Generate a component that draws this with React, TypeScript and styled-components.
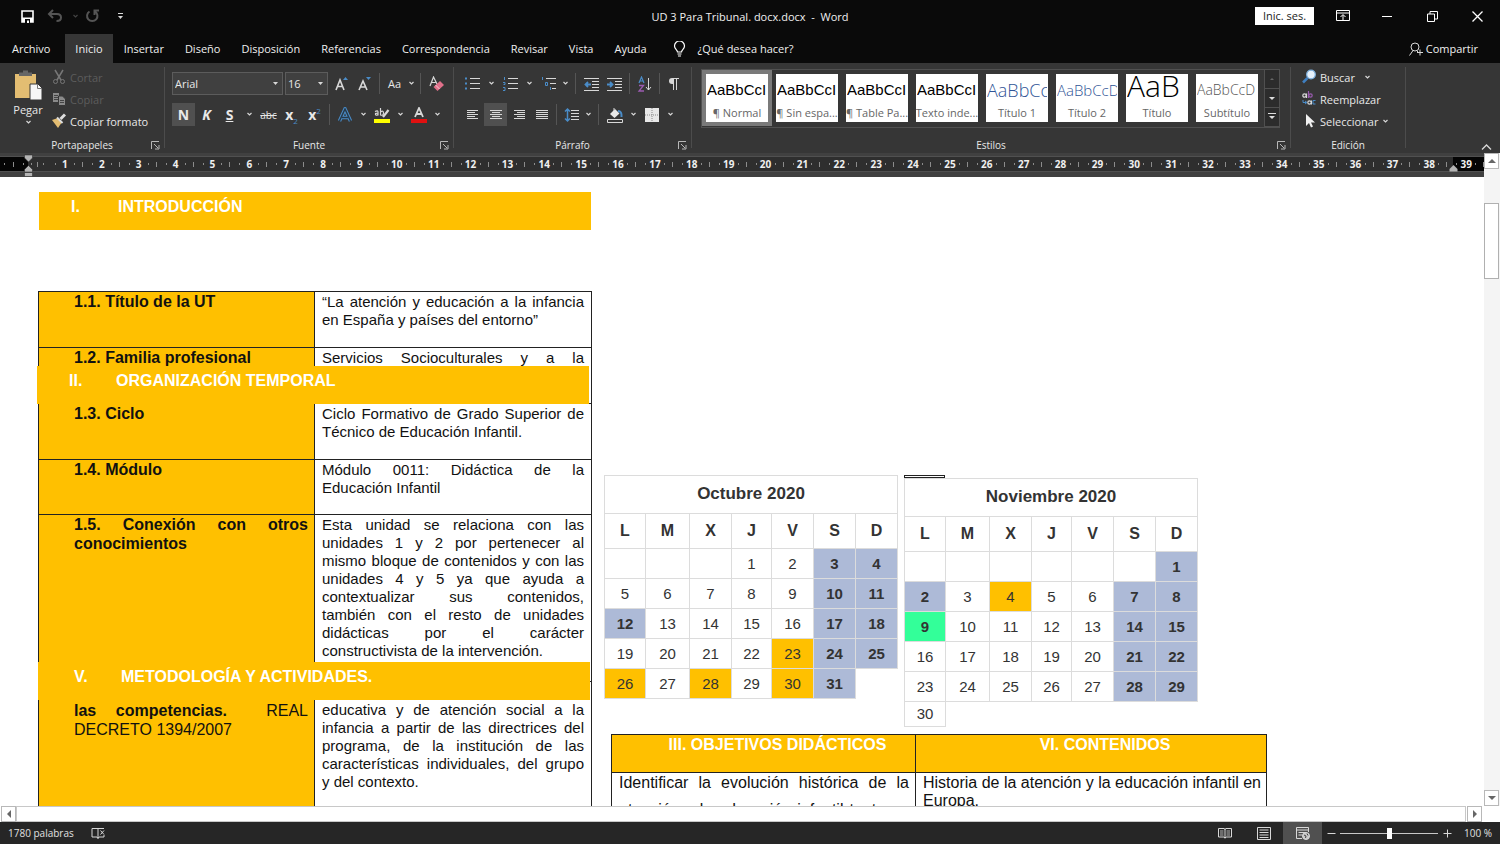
import React from "react";
import styled, { createGlobalStyle, css } from "styled-components";

const ui = `"Open Sans", "Noto Sans", sans-serif`;
const amber = "#ffc000";
const blue = "#4a8cc8";

const Global = createGlobalStyle`
  * { box-sizing: border-box; }
  html, body { margin: 0; }
  body { font-family: ${ui}; font-size: 11px; background: #fff; color: #f0f0f0; }
  button, select, input { font: inherit; color: inherit; margin: 0; }
  svg { display: block; flex: none; }
`;

const Shell = styled.div`
  display: flex;
  flex-direction: column;
  height: 100vh;
  overflow: hidden;
`;

const plain = css`
  border: 0;
  padding: 0;
  background: none;
`;

/* ---------- Title bar ---------- */
const TitleBar = styled.header`
  display: grid;
  grid-template-columns: 1fr auto 1fr;
  align-items: center;
  height: 32px;
  flex: none;
  background: #0a0a0a;
`;
const Quick = styled.div`
  display: flex;
  align-items: center;
  padding-left: 16px;
`;
const QuickButton = styled.button<{ $w: number }>`
  ${plain}
  width: ${(p) => p.$w}px;
  height: 24px;
  display: grid;
  place-items: center;
`;
const Title = styled.h1`
  margin: 0;
  font-size: 11px;
  font-weight: 400;
  white-space: pre;
`;
const WindowTools = styled.div`
  display: flex;
  justify-content: flex-end;
  align-items: center;
`;
const SignIn = styled.button`
  border: 0;
  background: #fff;
  color: #222;
  width: 59px;
  height: 18px;
  padding: 0;
  line-height: 18px;
  margin-right: 6px;
`;
const WinButton = styled.button`
  ${plain}
  width: 45px;
  height: 30px;
  display: grid;
  place-items: center;
`;

/* ---------- Tabs ---------- */
const TabBar = styled.nav`
  display: flex;
  align-items: stretch;
  gap: 1px;
  height: 31px;
  flex: none;
  background: #0a0a0a;
  padding: 2px 22px 0 2px;
`;
const Tab = styled.button<{ $active?: boolean }>`
  ${plain}
  padding: 0 10px;
  white-space: nowrap;
  background: ${(p) => (p.$active ? "#363636" : "none")};
  &:first-child { margin-right: 4px; }
`;
const TellMe = styled.button`
  ${plain}
  display: flex;
  align-items: center;
  gap: 12px;
  margin-left: 15px;
`;
const Share = styled.button`
  ${plain}
  display: flex;
  align-items: center;
  gap: 3px;
  margin-left: auto;
`;

/* ---------- Ribbon ---------- */
const Ribbon = styled.section`
  display: flex;
  height: 90px;
  flex: none;
  background: #363636;
  color: #e8e8e8;
`;
const Group = styled.div<{ $w: number }>`
  width: ${(p) => p.$w}px;
  flex: none;
  display: flex;
  flex-direction: column;
  padding: 4px 1px 0 0;
  background: linear-gradient(#4c4c4c, #4c4c4c) right 4px / 1px 81px no-repeat;
`;
const GroupBody = styled.div`
  flex: 1;
  min-height: 0;
  display: flex;
`;
const GroupFoot = styled.div`
  display: grid;
  grid-template-columns: 18px 1fr 18px;
  align-items: center;
  justify-items: center;
  height: 16px;
  font-size: 10px;
  line-height: 16px;
`;
const FootName = styled.span`
  grid-column: 2;
`;
const Launcher = styled.button`
  ${plain}
`;
const Rows = styled.div<{ $left: number }>`
  display: flex;
  flex-direction: column;
  gap: 8px;
  padding: 5px 0 0 ${(p) => p.$left}px;
`;
const Row = styled.div`
  display: flex;
  align-items: center;
  height: 23px;
`;
const Tool = styled.button<{ $on?: boolean }>`
  ${plain}
  width: 23px;
  height: 23px;
  display: grid;
  place-items: center;
  background: ${(p) => (p.$on ? "#505050" : "none")};
`;
const CaretButton = styled.button<{ $w?: number }>`
  ${plain}
  width: ${(p) => p.$w ?? 14}px;
  height: 22px;
  display: grid;
  place-items: center;
`;
const Rule = styled.span<{ $gap?: number }>`
  width: 1px;
  height: 21px;
  margin: 0 ${(p) => p.$gap ?? 3}px;
  background: #555;
`;
const Paste = styled.button`
  ${plain}
  width: 32px;
  margin: 3px 7px 0 12px;
  display: flex;
  flex-direction: column;
  align-items: center;
  line-height: 16px;
  gap: 2px;
`;
const Commands = styled.div<{ $left: number }>`
  display: flex;
  flex-direction: column;
  margin-top: -1px;
  padding-left: ${(p) => p.$left}px;
`;
const Command = styled.button`
  ${plain}
  display: flex;
  align-items: center;
  gap: 4px;
  height: 22px;
  white-space: nowrap;
  &:disabled { color: #5c5c5c; }
`;
const Field = styled.label<{ $w: number }>`
  display: grid;
  grid-template-columns: 1fr 14px;
  align-items: center;
  width: ${(p) => p.$w}px;
  height: 23px;
  margin-right: 2px;
  background: #404040;
  border: 1px solid #5c5c5c;
  svg { grid-area: 1 / 2; justify-self: center; pointer-events: none; }
`;
const Select = styled.select`
  grid-area: 1 / 1 / 2 / 3;
  appearance: none;
  border: 0;
  background: none;
  padding: 0 2px;
  height: 21px;
  width: 100%;
`;
const Bold = styled.span<{ $italic?: boolean; $line?: string; $size?: number }>`
  font-size: ${(p) => p.$size ?? 14}px;
  line-height: 18px;
  font-weight: ${(p) => (p.$size ? 400 : 700)};
  font-style: ${(p) => (p.$italic ? "italic" : "normal")};
  text-decoration: ${(p) => p.$line ?? "none"};
  sub, sup { color: ${blue}; font-size: 8px; line-height: 0; font-weight: 400; }
`;

/* ---------- Style gallery ---------- */
const Gallery = styled.div`
  display: flex;
  height: 59px;
  margin: 2px 0 0 9px;
  border: 1px solid #505050;
`;
const Tile = styled.button<{ $on?: boolean }>`
  width: 70px;
  height: 56px;
  padding: 0;
  border: 4px solid ${(p) => (p.$on ? "#7a7a7a" : "transparent")};
  background: #fff;
  background-clip: padding-box;
  display: flex;
  flex-direction: column;
  align-items: center;
  overflow: hidden;
`;
const Sample = styled.span<{ $size: number; $line?: number; $color: string; $light?: boolean }>`
  width: 60px;
  height: 31px;
  line-height: ${(p) => p.$line ?? 32}px;
  overflow: hidden;
  text-align: left;
  white-space: nowrap;
  font-family: ${(p) => (p.$light ? ui : `"Liberation Sans", Arial, sans-serif`)};
  font-weight: ${(p) => (p.$light ? 300 : 400)};
  font-size: ${(p) => p.$size}px;
  color: ${(p) => p.$color};
`;
const TileName = styled.span`
  line-height: 16px;
  font-size: 11px;
  color: #666;
  white-space: nowrap;
`;
const GalleryNav = styled.div`
  display: grid;
  grid-template-rows: 1fr 1fr 1fr;
  width: 15px;
  margin-left: 2px;
`;
const GalleryButton = styled.button`
  ${plain}
  border-left: 1px solid #505050;
  border-bottom: 1px solid #505050;
  background: #2c2c2c;
  display: grid;
  place-items: center;
`;
const Collapse = styled.button`
  ${plain}
  margin: auto 8px 2px auto;
`;

/* ---------- Ruler ---------- */
const Body = styled.div`
  flex: 1;
  min-height: 0;
  display: flex;
`;
const Main = styled.div`
  flex: 1;
  min-width: 0;
  display: flex;
  flex-direction: column;
`;
const RulerBox = styled.div`
  flex: none;
  height: 24px;
  padding-top: 3px;
  background: #404040;
`;
const Ruler = styled.div`
  display: flex;
  height: 16px;
  border-top: 1px solid #505050;
  border-bottom: 1px solid #505050;
  background: #2e2e2e;
  font-size: 10px;
  font-weight: 700;
  line-height: 14px;
`;
const dots = css`
  &::before, &::after {
    content: "";
    width: 1px;
    height: 2px;
    background: #8c8c8c;
  }
`;
const RulerEdge = styled.div<{ $w: number; $dark?: boolean }>`
  ${dots}
  display: flex;
  align-items: center;
  justify-content: space-around;
  width: ${(p) => p.$w}px;
  flex: none;
  background: ${(p) => (p.$dark ? "#050505" : "none")};
`;
const Tick = styled.i`
  width: 1px;
  height: 5px;
  background: #8c8c8c;
`;
const RulerCell = styled.div<{ $end?: boolean }>`
  ${dots}
  display: grid;
  grid-template-columns: 1px 1fr 1px 7px 1px;
  padding-left: 9px;
  flex: 1 1 0;
  min-width: 0;
  align-items: center;
  justify-items: center;
  background: ${(p) => (p.$end ? "linear-gradient(to right, transparent 6px, #050505 6px)" : "none")};
  i { grid-column: 5; grid-row: 1; }
  &::before { grid-area: 1 / 1; }
  &::after { grid-area: 1 / 3; }
`;
const RulerNumber = styled.span`
  grid-area: 1 / 2;
`;
const Marker = styled.svg<{ $side: "left" | "right" }>`
  position: absolute;
  top: 0;
  ${(p) => (p.$side === "left" ? "left: 24px" : "right: 26px")};
`;
const RulerWrap = styled.div`
  position: relative;
`;

/* ---------- Scroll bars ---------- */
const VScroll = styled.div`
  width: 16px;
  flex: none;
  display: flex;
  flex-direction: column;
  background: #f4f4f4;
`;
const ScrollButton = styled.button`
  padding: 0;
  flex: none;
  width: 15px;
  height: 16px;
  border: 1px solid #b8b8b8;
  background: #fff;
  display: grid;
  place-items: center;
`;
const VThumb = styled.div`
  height: 76px;
  width: 15px;
  margin: 34px 0 auto;
  border: 1px solid #b0b0b0;
  background: #fff;
`;
const HScroll = styled.div`
  flex: none;
  display: flex;
  height: 16px;
  padding: 0 18px 0 1px;
  background: #fff;
`;
const HThumb = styled.div`
  flex: 1;
  height: 16px;
  margin-right: 1px;
  border: 1px solid #c8c8c8;
`;

/* ---------- Document ---------- */
const Canvas = styled.main`
  flex: 1;
  min-height: 0;
  overflow: hidden;
  display: flex;
  align-items: flex-start;
  background: #fff;
  color: #111;
  font-family: "Liberation Sans", Arial, sans-serif;
  font-size: 16px;
  line-height: 18px;
  padding: 15px 0 0 38px;
`;
const LeftPage = styled.section`
  position: relative;
  width: 554px;
  flex: none;
`;
const Banner = styled.h2<{ $top?: number; $shift?: number; $indent?: number }>`
  display: flex;
  margin: 0 0 0 1px;
  width: 552px;
  height: 38px;
  padding: 6px 0 0 ${(p) => p.$indent ?? 32}px;
  background: ${amber};
  color: #fff;
  font-size: 16px;
  line-height: 18px;
  ${(p) =>
    p.$top !== undefined &&
    css`
      position: absolute;
      top: ${p.$top}px;
      left: ${p.$shift}px;
      margin: 0;
    `}
`;
const BannerNumber = styled.span`
  width: 47px;
`;
const InfoTable = styled.table`
  margin-top: 61px;
  width: 553px;
  table-layout: fixed;
  border-collapse: collapse;
  text-align: justify;
  td, th { border: 1px solid #222; vertical-align: top; }
  th { background: ${amber}; padding: 0 6px 0 35px; line-height: 19px; }
  td { padding: 0 7px; font-size: 15px; }
`;
const InfoRow = styled.tr<{ $h: number; $lead?: number }>`
  height: ${(p) => p.$h}px;
  && > th { padding-top: ${(p) => p.$lead ?? 0}px; }
  && > td { padding-top: ${(p) => p.$lead ?? 1}px; }
`;
const Line = styled.div<{ $full?: boolean }>`
  white-space: nowrap;
  text-align-last: ${(p) => (p.$full ? "justify" : "left")};
`;
const Light = styled.span`
  font-weight: 400;
`;
const RightPage = styled.section`
  flex: none;
  padding: 283px 0 0 12px;
`;
const Calendars = styled.div`
  display: flex;
  align-items: flex-start;
  gap: 6px;
  height: 259px;
`;
const Calendar = styled.table`
  border-collapse: collapse;
  table-layout: fixed;
  width: 293px;
  color: #333;
  text-align: center;
  font-size: 15px;
  caption, th, td { border: 1px solid #dcdcdc; padding: 0; }
  caption { border-bottom: 0; height: 38px; line-height: 36px; font-size: 17px; font-weight: 700; }
  th { height: 35px; font-size: 16px; }
`;
const Day = styled.td<{ $kind?: string; $short?: boolean }>`
  height: ${(p) => (p.$short ? 25 : 30)}px;
  ${(p) => p.$kind === "off" && css`background: #adbad7; font-weight: 700;`}
  ${(p) => p.$kind === "mark" && css`background: ${amber};`}
  ${(p) => p.$kind === "go" && css`background: #33ff99; font-weight: 700;`}
  ${(p) => p.$kind === "none" && css`&& { border: 0; }`}
`;
const Sliver = styled.div`
  width: 41px;
  height: 3px;
  border: 1px solid #222;
`;
const Goals = styled.table`
  margin-left: 7px;
  width: 655px;
  table-layout: fixed;
  border-collapse: collapse;
  th, td { border: 1px solid #222; vertical-align: top; }
  th { height: 38px; padding: 1px 7px 0 35px; background: ${amber}; color: #fff; }
  td { height: 90px; padding: 1px 6px 0 7px; text-align: justify; }
`;
const Spaced = styled.div`
  margin-top: -5px;
  line-height: 27px;
`;

/* ---------- Status bar ---------- */
const Status = styled.footer`
  flex: none;
  display: flex;
  align-items: center;
  height: 22px;
  background: #262626;
  color: #e0e0e0;
  font-size: 10px;
  padding: 0 8px;
`;
const Spell = styled.button`
  ${plain}
  margin-left: 17px;
`;
const Views = styled.div`
  display: flex;
  align-self: stretch;
  margin-left: auto;
`;
const View = styled.button<{ $on?: boolean }>`
  ${plain}
  width: 39px;
  display: grid;
  place-items: center;
  background: ${(p) => (p.$on ? "#505050" : "none")};
`;
const ZoomButton = styled.button`
  ${plain}
  width: 18px;
  height: 20px;
  display: grid;
  place-items: center;
`;
const ZoomRange = styled.input`
  appearance: none;
  width: 98px;
  height: 11px;
  background: linear-gradient(#c8c8c8, #c8c8c8) center / 100% 1px no-repeat;
  &::-webkit-slider-thumb { appearance: none; width: 5px; height: 11px; background: #fff; }
`;
const ZoomValue = styled.span`
  width: 36px;
  text-align: right;
  white-space: nowrap;
`;

/* ---------- Icons ---------- */
type IconProps = { w?: number; h?: number; children: React.ReactNode };
const Icon = ({ w = 16, h = 16, children }: IconProps) => (
  <svg width={w} height={h} viewBox={`0 0 ${w} ${h}`} fill="none" stroke="#d8d8d8" strokeWidth="1" aria-hidden="true">
    {children}
  </svg>
);
const Chevron = ({ color = "#d8d8d8" }) => (
  <Icon w={7} h={5}><path d="M1.5 1l2 2 2-2" stroke={color} strokeWidth="1.2" /></Icon>
);
const Down = ({ color = "#d8d8d8" }) => (
  <Icon w={7} h={4}><path d="M1 0h5L3.500 3z" fill={color} stroke="none" /></Icon>
);
const Triangle = ({ d, color = "#666" }: { d: string; color?: string }) => (
  <Icon w={8} h={8}><path d={d} fill={color} stroke="none" /></Icon>
);
const Caret = ({ label, w }: { label: string; w?: number }) => (
  <CaretButton $w={w} aria-label={label}><Chevron /></CaretButton>
);
const AlignIcon = ({ rows }: { rows: [number, number][] }) => (
  <Icon>{rows.map(([a, b], i) => <path key={i} d={`M${a} ${3.5 + i * 2}H${b}`} />)}</Icon>
);
const five = (a: [number, number], b: [number, number]): [number, number][] => [a, b, a, b, a];

const Launch = () => (
  <Launcher aria-label="Opciones">
    <Icon w={9} h={9}><path d="M.5 8V.5H8M3 3l4 4M8 4v4H4" stroke="#b8b8b8" /></Icon>
  </Launcher>
);
const Foot = ({ name, launch = true }: { name: string; launch?: boolean }) => (
  <GroupFoot><FootName>{name}</FootName>{launch && <Launch />}</GroupFoot>
);

/* ---------- Data ---------- */
const tabs = ["Archivo", "Inicio", "Insertar", "Diseño", "Disposición", "Referencias", "Correspondencia", "Revisar", "Vista", "Ayuda"];
const styles = [
  { name: "¶ Normal", sample: "AaBbCcI", size: 15, color: "#000" },
  { name: "¶ Sin espa...", sample: "AaBbCcI", size: 15, color: "#000" },
  { name: "¶ Table Pa...", sample: "AaBbCcI", size: 15, color: "#000" },
  { name: "Texto inde...", sample: "AaBbCcI", size: 15, color: "#000" },
  { name: "Título 1", sample: "AaBbCc", size: 18, color: "#2f5496", light: true },
  { name: "Título 2", sample: "AaBbCcD", size: 15, color: "#2f5496", light: true },
  { name: "Título", sample: "AaB", size: 30, line: 24, color: "#000", light: true },
  { name: "Subtítulo", sample: "AaBbCcD", size: 14, color: "#555", light: true },
];
const cols = [41, 44, 42, 40, 42, 42, 42];
const letters = ["L", "M", "X", "J", "V", "S", "D"];

const relation = [
  "Esta unidad se relaciona con las",
  "unidades 1 y 2 por pertenecer al",
  "mismo bloque de contenidos y con las",
  "unidades 4 y 5 ya que ayuda a",
  "contextualizar sus contenidos,",
  "también con el resto de unidades",
  "didácticas por el carácter",
  "constructivista de la intervención.",
];
const competences = [
  "educativa y de atención social a la",
  "infancia a partir de las directrices del",
  "programa, de la institución de las",
  "características individuales, del grupo",
  "y del contexto.",
];
const Lines = ({ of }: { of: string[] }) => (
  <>{of.map((t, i) => <Line key={t} $full={i < of.length - 1}>{t}</Line>)}</>
);

type Kinds = Record<number, string>;
const Month = ({ title, lead, days, kinds }: { title: string; lead: number; days: number; kinds: Kinds }) => {
  const count = Math.ceil((lead + days) / 7);
  return (
    <Calendar>
      <caption>{title}</caption>
      <colgroup>{cols.map((w, i) => <col key={i} width={w} />)}</colgroup>
      <thead><tr>{letters.map((l) => <th key={l} scope="col">{l}</th>)}</tr></thead>
      <tbody>
        {Array.from({ length: count }, (_, r) => (
          <tr key={r}>
            {letters.map((l, c) => {
              const n = r * 7 + c - lead + 1;
              const short = r === 5;
              if (n > days) return <Day key={l} $kind="none" $short={short} />;
              const kind = n < 1 ? undefined : kinds[n] ?? (c > 4 ? "off" : undefined);
              return <Day key={l} $kind={kind} $short={short}>{n > 0 ? n : ""}</Day>;
            })}
          </tr>
        ))}
      </tbody>
    </Calendar>
  );
};

export default function App() {
  return (
    <Shell>
      <Global />
      <TitleBar>
        <Quick>
          <QuickButton $w={22} aria-label="Guardar">
            <Icon w={13} h={13}><path d="M1 1h11v11H1z" stroke="#fff" strokeWidth="1.600" /><path d="M1 7.500h11v4.500H1z" fill="#fff" stroke="none" /><path d="M4 9h5v4H4z" fill="#0a0a0a" stroke="none" /><path d="M6 10.500h2V13H6z" fill="#fff" stroke="none" /></Icon>
          </QuickButton>
          <QuickButton $w={34} aria-label="Deshacer">
            <Icon><path d="M6 2L2 6l4 4M2.500 6H10q4 0 4 3.500T9.500 13" stroke="#555" strokeWidth="2" /></Icon>
          </QuickButton>
          <Chevron color="#444" />
          <QuickButton $w={26} aria-label="Rehacer">
            <Icon><path d="M5.500 3.500a5.200 5.200 0 1 0 5.500 0M10.500 7V2.500H15" stroke="#555" strokeWidth="2" /></Icon>
          </QuickButton>
          <QuickButton $w={30} aria-label="Personalizar">
            <Icon w={7} h={8}><path d="M1 1.500h5" /><path d="M1 4h5L3.500 7z" fill="#d8d8d8" stroke="none" /></Icon>
          </QuickButton>
        </Quick>
        <Title>{"UD 3 Para Tribunal. docx.docx  -  Word"}</Title>
        <WindowTools>
          <SignIn>Inic. ses.</SignIn>
          <WinButton aria-label="Opciones de la cinta"><Icon w={14} h={12}><path d="M.5.500h13v10H.5zM.5 3h13M7 10V5M4.500 7L7 4.500 9.500 7" stroke="#fff" /></Icon></WinButton>
          <WinButton aria-label="Minimizar"><Icon w={11} h={11}><path d="M0 5.500h10" stroke="#fff" /></Icon></WinButton>
          <WinButton aria-label="Restaurar"><Icon w={11} h={11}><path d="M.5 3h7v7.500h-7zM3 3V.500h7.500V8H7.500" stroke="#fff" /></Icon></WinButton>
          <WinButton aria-label="Cerrar"><Icon w={11} h={11}><path d="M.5.500l10 10M10.500.500l-10 10" stroke="#fff" strokeWidth="1.300" /></Icon></WinButton>
        </WindowTools>
      </TitleBar>
      <TabBar>
        {tabs.map((t) => <Tab key={t} $active={t === "Inicio"}>{t}</Tab>)}
        <TellMe>
          <Icon w={13} h={16}><path d="M4.500 11c0-2-3-3-3-6a5 5 0 0 1 10 0c0 3-3 4-3 6zM4.500 13h4M5 15h3" stroke="#fff" strokeWidth="1.200" /></Icon>
          ¿Qué desea hacer?
        </TellMe>
        <Share>
          <Icon w={14} h={14}><circle cx="6" cy="5" r="4" /><path d="M.5 13.500L4 8.500M8 9l1 1M11 7.500v6M8 10.500h6" /></Icon>
          Compartir
        </Share>
      </TabBar>
      <Ribbon>
        <Group $w={165}>
          <GroupBody>
            <Paste>
              <Icon w={28} h={30}>
                <path d="M1 4h21v24H1z" fill="#e3bd72" stroke="none" /><path d="M5 6V2.500h4V.500h5v2h4V6z" fill="#666" stroke="none" />
                <path d="M16 14h8l4 4v12H16z" fill="#f6f6f6" stroke="#363636" /><path d="M23.500 14v4.500H28" stroke="#777" />
              </Icon>
              Pegar
              <Chevron />
            </Paste>
            <Commands $left={1}>
              <Command disabled><Icon w={14}><path d="M3 1l6 10M11 1L5 11" stroke="#777" strokeWidth="1.500" /><circle cx="3.500" cy="12.500" r="2" stroke="#777" /><circle cx="10.500" cy="12.500" r="2" stroke="#777" /></Icon>Cortar</Command>
              <Command disabled><Icon w={14}><path d="M1 2h6v9H1z" fill="#8a8a8a" stroke="none" /><path d="M6.500 5h4l3 3v6.500h-7z" fill="#8a8a8a" stroke="#363636" /><path d="M2 4.500h4M2 6.500h4M2 8.500h4M8 9.500h4M8 11.500h4" stroke="#444" /></Icon>Copiar</Command>
              <Command><Icon w={14}><path d="M0 7l6-2 4 4-4 6z" fill="#e3bd72" stroke="none" /><path d="M5 4.500L10.500 10" stroke="#ddd" strokeWidth="2" /><path d="M8.500 6L13 1.500" stroke="#ddd" strokeWidth="3" /></Icon>Copiar formato</Command>
            </Commands>
          </GroupBody>
          <Foot name="Portapapeles" />
        </Group>

        <Group $w={289}>
          <GroupBody>
            <Rows $left={7}>
              <Row>
                <Field $w={111}><Select aria-label="Fuente"><option>Arial</option></Select><Down /></Field>
                <Field $w={43}><Select aria-label="Tamaño"><option>16</option></Select><Down /></Field>
                <Tool aria-label="Aumentar"><Icon><path d="M2 14L6 4l4 10M3.500 10.500h5" strokeWidth="1.600" /><path d="M9 4l2.500-3L14 4z" fill={blue} stroke="none" /></Icon></Tool>
                <Tool aria-label="Reducir"><Icon><path d="M2 14L6 5l4 9M3.500 11h5" strokeWidth="1.600" /><path d="M9 1l2.500 3L14 1z" fill={blue} stroke="none" /></Icon></Tool>
                <Rule />
                <Tool aria-label="Mayúsculas">Aa</Tool>
                <Caret label="Opciones de mayúsculas" w={10} />
                <Rule $gap={4} />
                <Tool aria-label="Borrar formato"><Icon><path d="M1 10L4.500 1 8 8M2.500 6.500h4" strokeWidth="1.200" /><path d="M4.500 11l6.500-6 4 4-6.500 6z" fill="#e0708a" stroke="none" /><path d="M6.500 9l4 4" stroke="#f7c6d0" /></Icon></Tool>
              </Row>
              <Row>
                <Tool $on aria-label="Negrita"><Bold>N</Bold></Tool>
                <Tool aria-label="Cursiva"><Bold $italic>K</Bold></Tool>
                <Tool aria-label="Subrayado"><Bold $line="underline">S</Bold></Tool>
                <Caret label="Opciones de subrayado" w={16} />
                <Tool aria-label="Tachado"><Bold $line="line-through" $size={10}>abc</Bold></Tool>
                <Tool aria-label="Subíndice"><Bold>x<sub>2</sub></Bold></Tool>
                <Tool aria-label="Superíndice"><Bold>x<sup>2</sup></Bold></Tool>
                <Rule />
                <Tool aria-label="Efectos de texto"><Icon><path d="M2.500 14L8 2l5.500 12M5 10.500h6" stroke={blue} strokeWidth="3.500" /><path d="M2.500 14L8 2l5.500 12M5 10.500h6" stroke="#26394a" strokeWidth="1.500" /></Icon></Tool>
                <Caret label="Opciones de efectos" />
                <Tool aria-label="Resaltado"><Icon><path d="M1 4.500q3-1.500 3 .500V8.500M4 6Q1 6 1.500 7.500T4 7.500M6.500 1v7.500M6.500 5q3-2 3 1t-3 2" strokeWidth="1.200" /><path d="M9 10l5.500-7" strokeWidth="2.200" /><path d="M0 12h16v4H0z" fill="#ff0" stroke="none" /></Icon></Tool>
                <Caret label="Color de resaltado" />
                <Tool aria-label="Color de fuente"><Icon><path d="M4 10L8 1l4 9M5.500 7h5" strokeWidth="1.800" /><path d="M0 12h16v4H0z" fill="#e01010" stroke="none" /></Icon></Tool>
                <Caret label="Colores de fuente" />
              </Row>
            </Rows>
          </GroupBody>
          <Foot name="Fuente" />
        </Group>

        <Group $w={238}>
          <GroupBody>
            <Rows $left={7}>
              <Row>
                <Tool aria-label="Viñetas"><Icon><path d="M5 2.500h10M5 7.500h10M5 12.500h10" /><path d="M0 1.500h2v2H0zM0 6.500h2v2H0zM0 11.500h2v2H0z" fill={blue} stroke="none" /></Icon></Tool>
                <Caret label="Más viñetas" w={15} />
                <Tool aria-label="Numeración"><Icon><path d="M5 2.500h10M5 7.500h10M5 12.500h10" /><path d="M1.500 1v3M0 6.500h2v2H.5M0 11.500h2v3H0" stroke={blue} /></Icon></Tool>
                <Caret label="Más numeración" w={15} />
                <Tool aria-label="Multinivel"><Icon><path d="M5 2.500h10M9 7.500h6M11 12.500h4" /><path d="M1.500 1v3M4.500 6.500h2v3h-2zM9.500 11v3" stroke={blue} /></Icon></Tool>
                <Caret label="Más multinivel" w={11} />
                <Rule $gap={4} />
                <Tool aria-label="Reducir sangría"><Icon><path d="M0 2.500h15M8 5.500h7M8 8.500h7M8 11.500h7M0 14.500h15" /><path d="M7 8.500H1.500M4 6L1.500 8.500 4 11" stroke={blue} strokeWidth="1.800" /></Icon></Tool>
                <Tool aria-label="Aumentar sangría"><Icon><path d="M0 2.500h15M8 5.500h7M8 8.500h7M8 11.500h7M0 14.500h15" /><path d="M0 8.500h5.500M3 6l2.500 2.500L3 11" stroke={blue} strokeWidth="1.800" /></Icon></Tool>
                <Rule />
                <Tool aria-label="Ordenar"><Icon><path d="M2 7l2.500-6L7 7M3 5h3" stroke={blue} strokeWidth="1.200" /><path d="M2 9.500h4.500L2 15h5" stroke="#9a5bb0" strokeWidth="1.300" /><path d="M11.500 2v12M9 11l2.500 3 2.500-3" /></Icon></Tool>
                <Rule />
                <Tool aria-label="Marcas de párrafo"><Icon><path d="M6.500 2v12M9.500 2v12M5 2.500h7" /><path d="M6.500 2H5a3 3 0 0 0 0 6h1.500z" fill="#d8d8d8" stroke="none" /></Icon></Tool>
              </Row>
              <Row>
                <Tool aria-label="Izquierda"><AlignIcon rows={five([2, 13], [2, 10])} /></Tool>
                <Tool $on aria-label="Centrar"><AlignIcon rows={five([2, 14], [4, 12])} /></Tool>
                <Tool aria-label="Derecha"><AlignIcon rows={five([3, 14], [6, 14])} /></Tool>
                <Tool aria-label="Justificar"><AlignIcon rows={five([2, 14], [2, 14])} /></Tool>
                <Rule />
                <Tool aria-label="Interlineado"><Icon><path d="M7 3.500h8M7 6.500h8M7 9.500h8M7 12.500h8" /><path d="M3.500 2v12M1 4.500L3.500 2 6 4.500M1 11.500L3.500 14 6 11.500" stroke={blue} strokeWidth="1.500" /></Icon></Tool>
                <Caret label="Más interlineado" w={11} />
                <Rule $gap={4} />
                <Tool aria-label="Sombreado"><Icon><path d="M3 7l5-5 4.500 4.500-5 4.500z" fill="#e8e8e8" stroke="none" /><path d="M7 4V1" /><path d="M11 4q4 0 3.500 6" stroke={blue} strokeWidth="2" /><path d="M.5 12.500h15v3H.5z" /></Icon></Tool>
                <Caret label="Más sombreado" w={14} />
                <Tool aria-label="Bordes"><Icon><path d="M1 1h14v14H1z" fill="#e8e8e8" stroke="none" /><path d="M8 1v14M1 8h14" stroke="#888" strokeDasharray="1 1" /></Icon></Tool>
                <Caret label="Más bordes" />
              </Row>
            </Rows>
          </GroupBody>
          <Foot name="Párrafo" />
        </Group>

        <Group $w={599}>
          <GroupBody>
            <Gallery>
              {styles.map((s, i) => (
                <Tile key={s.name} $on={i === 0}>
                  <Sample $size={s.size} $line={s.line} $color={s.color} $light={s.light}>{s.sample}</Sample>
                  <TileName>{s.name}</TileName>
                </Tile>
              ))}
              <GalleryNav>
                <GalleryButton aria-label="Subir"><Triangle d="M2 5h4L4 3z" color="#666" /></GalleryButton>
                <GalleryButton aria-label="Bajar"><Triangle d="M1 3h6L4 6z" color="#ddd" /></GalleryButton>
                <GalleryButton aria-label="Más estilos"><Triangle d="M0 0h8v1H0zM1 3h6L4 6z" color="#ddd" /></GalleryButton>
              </GalleryNav>
            </Gallery>
          </GroupBody>
          <Foot name="Estilos" />
        </Group>

        <Group $w={115}>
          <GroupBody>
            <Commands $left={11}>
              <Command>
                <Icon w={14}><circle cx="9" cy="5.500" r="4.300" fill="#e6f1fb" stroke="#7fb2e0" strokeWidth="1.300" /><path d="M5.500 9L1 13.500" stroke="#3f7fc0" strokeWidth="2.500" /></Icon>
                Buscar
                <Caret label="Opciones de búsqueda" w={18} />
              </Command>
              <Command>
                <Icon w={14}>
                  <circle cx="2.500" cy="4.500" r="1.700" strokeWidth="1.200" /><path d="M4.500 2.500V7" strokeWidth="1.200" />
                  <circle cx="8.500" cy="4.500" r="1.700" stroke="#9a5bb0" strokeWidth="1.200" /><path d="M6.500 0v7" stroke="#9a5bb0" strokeWidth="1.200" />
                  <path d="M1 9v2.500h3M3 10l2 1.500L3 13M13.500 9.500h-2.500v3.500h2.500" stroke={blue} /><circle cx="7.500" cy="11.500" r="1.700" strokeWidth="1.200" /><path d="M9.500 9.500v4" />
                </Icon>
                Reemplazar
              </Command>
              <Command>
                <Icon w={14}><path d="M4 1v12l3-3 2 4.500 2-1L9 9.500h4z" fill="#f0f0f0" stroke="none" /></Icon>
                Seleccionar<Chevron />
              </Command>
            </Commands>
          </GroupBody>
          <Foot name="Edición" launch={false} />
        </Group>
        <Collapse aria-label="Contraer la cinta"><Icon w={11} h={8}><path d="M1 6.500l4.500-4.500L10 6.500" strokeWidth="1.300" /></Icon></Collapse>
      </Ribbon>

      <Body>
        <Main>
          <RulerWrap>
            <RulerBox>
              <Ruler>
                <RulerEdge $w={28} $dark><Tick /></RulerEdge>
                <RulerEdge $w={18}><Tick /></RulerEdge>
                {Array.from({ length: 39 }, (_, i) => (
                  <RulerCell key={i} $end={i === 38}><RulerNumber>{i + 1}</RulerNumber><Tick /></RulerCell>
                ))}
              </Ruler>
            </RulerBox>
            <Marker $side="left" width="9" height="24" viewBox="0 0 9 24"><path d="M.5 2h8v3L4.500 9 .5 5zM4.500 12.500l4 4v2.500h-8v-2.500zM.5 19.500h8v4h-8z" fill="#b4b4b4" stroke="#222" strokeWidth=".5" /></Marker>
            <Marker $side="right" width="9" height="24" viewBox="0 0 9 24"><path d="M4.500 12l4 4v2.500h-8V16z" fill="#b4b4b4" /></Marker>
          </RulerWrap>
          <Canvas>
            <LeftPage>
              <Banner><BannerNumber>I.</BannerNumber>INTRODUCCIÓN</Banner>
              <InfoTable>
                <colgroup><col width={276} /><col width={277} /></colgroup>
                <tbody>
                  <InfoRow $h={56}><th scope="row">1.1. Título de la UT</th><td><Lines of={["“La atención y educación a la infancia", "en España y países del entorno”"]} /></td></InfoRow>
                  <InfoRow $h={56}><th scope="row">1.2. Familia profesional</th><td><Line $full>Servicios Socioculturales y a la</Line></td></InfoRow>
                  <InfoRow $h={56}><th scope="row">1.3. Ciclo</th><td><Lines of={["Ciclo Formativo de Grado Superior de", "Técnico de Educación Infantil."]} /></td></InfoRow>
                  <InfoRow $h={55}><th scope="row">1.4. Módulo</th><td><Lines of={["Módulo 0011: Didáctica de la", "Educación Infantil"]} /></td></InfoRow>
                  <InfoRow $h={167}><th scope="row">1.5. Conexión con otros conocimientos</th><td><Lines of={relation} /></td></InfoRow>
                  <InfoRow $h={180} $lead={19}>
                    <th scope="row"><Line $full>las competencias.&nbsp; <Light>REAL</Light></Line><Light>DECRETO 1394/2007</Light></th>
                    <td><Lines of={competences} /></td>
                  </InfoRow>
                </tbody>
              </InfoTable>
              <Banner $top={174} $shift={-1}><BannerNumber>II.</BannerNumber>ORGANIZACIÓN TEMPORAL</Banner>
              <Banner $top={470} $shift={0} $indent={36}><BannerNumber>V.</BannerNumber>METODOLOGÍA Y ACTIVIDADES.</Banner>
            </LeftPage>
            <RightPage>
              <Calendars>
                <Month title="Octubre 2020" lead={3} days={31} kinds={{ 12: "off", 23: "mark", 26: "mark", 28: "mark", 30: "mark" }} />
                <div>
                  <Sliver />
                  <Month title="Noviembre 2020" lead={6} days={30} kinds={{ 2: "off", 4: "mark", 9: "go" }} />
                </div>
              </Calendars>
              <Goals>
                <colgroup><col width={304} /><col width={351} /></colgroup>
                <thead><tr><th scope="col">III. OBJETIVOS DIDÁCTICOS</th><th scope="col">VI. CONTENIDOS</th></tr></thead>
                <tbody><tr>
                  <td>
                    <Spaced>
                      <Line $full>Identificar la evolución histórica de la</Line>
                      <Line $full>atención y la educación infantil tanto en</Line>
                    </Spaced>
                  </td>
                  <td><Lines of={["Historia de la atención y la educación infantil en", "Europa."]} /></td>
                </tr></tbody>
              </Goals>
            </RightPage>
          </Canvas>
        </Main>
        <VScroll>
          <ScrollButton aria-label="Subir"><Triangle d="M0 6h8L4 2z" /></ScrollButton>
          <VThumb />
          <ScrollButton aria-label="Bajar"><Triangle d="M0 2h8L4 6z" /></ScrollButton>
        </VScroll>
      </Body>
      <HScroll>
        <ScrollButton aria-label="Izquierda"><Triangle d="M6 0v8L2 4z" /></ScrollButton>
        <HThumb />
        <ScrollButton aria-label="Derecha"><Triangle d="M2 0v8l4-4z" /></ScrollButton>
      </HScroll>
      <Status>
        <span>1780 palabras</span>
        <Spell aria-label="Revisión"><Icon w={14} h={12}><path d="M7 1.500v10M7 1.500H1v8.500h5l1 1.500 1-1.500h5V8M7 1.500h6M9.500 3.500l3.500 4M13 3.500l-3.500 4" /></Icon></Spell>
        <Views>
          <View aria-label="Modo de lectura"><Icon w={14} h={12}><path d="M7 1v10.500M.5 1.500H6l1 1 1-1h5.500v8.500H8l-1 1-1-1H.5z" /><path d="M2 4h3.500M2 6h3.500M2 8h3.500M8.500 4H12M8.500 6H12M8.500 8H12" strokeWidth=".8" /></Icon></View>
          <View aria-label="Diseño de impresión"><Icon w={14} h={13}><path d="M.5.500h13v12H.5zM2.500 3h9M2.500 5.500h9M2.500 8h9M2.500 10.500h9" /></Icon></View>
          <View $on aria-label="Diseño web"><Icon w={14} h={13}><path d="M12.500 5V.500H.5v11H6M.5 3h12M2.500 5.500h8M2.500 8h4" /><circle cx="10" cy="9" r="3.500" fill="#c8c8c8" /><path d="M8 8l2 1-.500 2M11 6.500l1 2" stroke="#444" /></Icon></View>
        </Views>
        <ZoomButton aria-label="Alejar"><Icon w={9} h={9}><path d="M.5 4.500h8" /></Icon></ZoomButton>
        <ZoomRange type="range" aria-label="Zoom" min={0} max={100} defaultValue={50} />
        <ZoomButton aria-label="Acercar"><Icon w={9} h={9}><path d="M.5 4.500h8M4.500.500v8" /></Icon></ZoomButton>
        <ZoomValue>100 %</ZoomValue>
      </Status>
    </Shell>
  );
}
